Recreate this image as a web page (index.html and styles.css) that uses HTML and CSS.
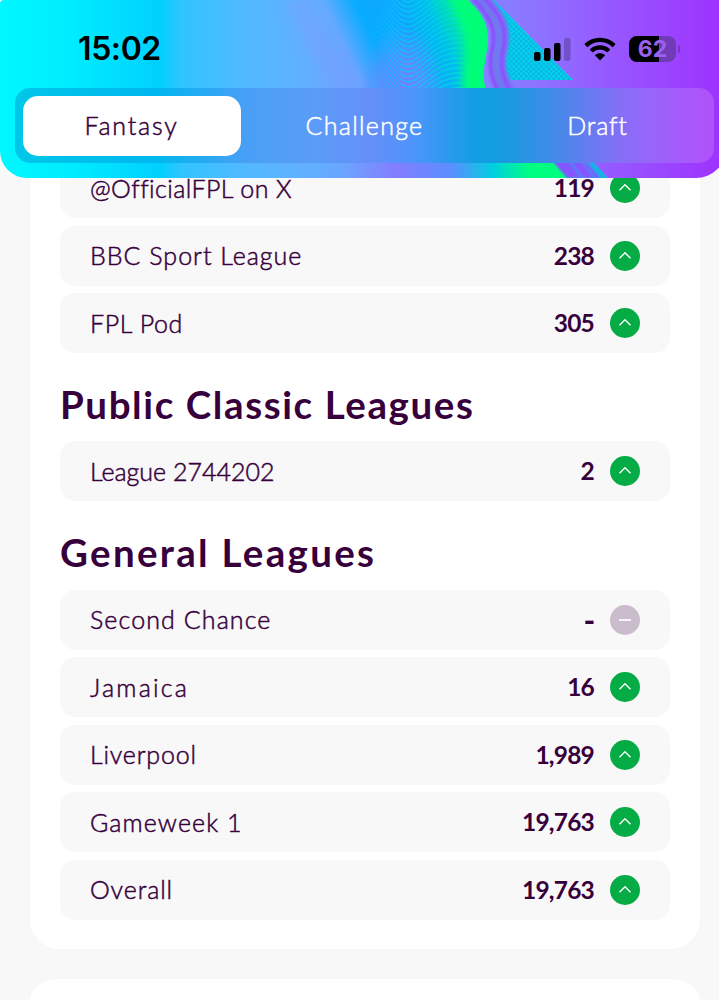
FILE: index.html
```html
<!DOCTYPE html>
<html lang="en">
<head>
  <meta charset="UTF-8">
  <meta name="viewport" content="width=device-width, initial-scale=1">
  <title>Fantasy Leagues</title>
  <link rel="stylesheet" href="styles.css">
</head>
<body>
  <!-- icons -->
  <svg class="defs" width="0" height="0">
    <symbol id="up" viewBox="0 0 30 30">
      <circle cx="15" cy="15" r="15" fill="#05ab45"/>
      <path d="M9.500 17.300 15 11.800l5.500 5.500" fill="none" stroke="#fff" stroke-width="1.400"/>
    </symbol>
    <symbol id="same" viewBox="0 0 30 30">
      <circle cx="15" cy="15" r="15" fill="#cbbccd"/>
      <path d="M9 15h12" fill="none" stroke="#fff" stroke-width="1.700"/>
    </symbol>
  </svg>

  <header class="header">
    <svg class="art" width="726" height="178" viewBox="0 0 726 178">
      <defs>
        <linearGradient id="base" gradientUnits="userSpaceOnUse" x1="0" y1="0" x2="726" y2="0">
          <stop offset="0" stop-color="#00f8ff"/>
          <stop offset=".1" stop-color="#00ecff"/>
          <stop offset=".22" stop-color="#00d0ff"/>
          <stop offset=".25" stop-color="#30c4ff"/>
          <stop offset=".33" stop-color="#50baff"/>
          <stop offset=".42" stop-color="#62b0ff"/>
          <stop offset=".6" stop-color="#7690ff"/>
          <stop offset=".72" stop-color="#8c78ff"/>
          <stop offset=".85" stop-color="#9756ff"/>
          <stop offset="1" stop-color="#9e30ff"/>
        </linearGradient>
        <linearGradient id="swirl" gradientUnits="userSpaceOnUse" x1="322" y1="0" x2="440" y2="-56">
          <stop offset="0" stop-color="#00b4ff" stop-opacity="0"/>
          <stop offset=".22" stop-color="#08acff"/>
          <stop offset=".5" stop-color="#12a4ff"/>
          <stop offset=".7" stop-color="#00bcf0"/>
          <stop offset=".85" stop-color="#00e0b0"/>
          <stop offset="1" stop-color="#00ff78"/>
        </linearGradient>
        <radialGradient id="violet">
          <stop offset="0" stop-color="#7a7cff"/>
          <stop offset=".5" stop-color="#6c86ff" stop-opacity=".8"/>
          <stop offset="1" stop-color="#5e90ff" stop-opacity="0"/>
        </radialGradient>
        <linearGradient id="waveStroke" gradientUnits="userSpaceOnUse" x1="366" y1="0" x2="470" y2="0">
          <stop offset="0" stop-color="#00c0ff" stop-opacity="0"/>
          <stop offset=".3" stop-color="#00ccf8"/>
          <stop offset="1" stop-color="#00e8c8"/>
        </linearGradient>
        <linearGradient id="strip" gradientUnits="userSpaceOnUse" x1="340" y1="0" x2="565" y2="0">
          <stop offset="0" stop-color="#6ba7ff"/>
          <stop offset=".25" stop-color="#837dff"/>
          <stop offset=".5" stop-color="#5a8fff"/>
          <stop offset=".68" stop-color="#00cfe0"/>
          <stop offset=".85" stop-color="#00ff80"/>
        </linearGradient>
        <pattern id="dots" width="5" height="5" patternUnits="userSpaceOnUse">
          <rect width="5" height="5" fill="#00d4ec"/>
          <path d="M0 0h2.500v2.500H0zM2.500 2.500h2.500v2.500h-2.500z" fill="#0db6e2"/>
        </pattern>
        <filter id="soft" x="-30%" y="-30%" width="160%" height="160%"><feGaussianBlur stdDeviation="7"/></filter>
        <filter id="mid" x="-30%" y="-30%" width="160%" height="160%"><feGaussianBlur stdDeviation="4"/></filter>
        <filter id="edge"><feGaussianBlur stdDeviation="1.100"/></filter>
        <clipPath id="swirlClip">
          <path d="M315 0H468C484 14 488 26 488 42 486 60 480 74 487 92H335z"/>
        </clipPath>
      </defs>
      <rect width="726" height="178" fill="url(#base)"/>
      <path d="M284 0h22l54 90h-28z" fill="#7a9cff" opacity=".5" filter="url(#soft)"/>
      <g clip-path="url(#swirlClip)">
        <rect x="315" width="175" height="92" fill="url(#swirl)"/>
        <ellipse cx="402" cy="90" rx="42" ry="66" fill="url(#violet)"/>
        <g id="waves" class="waves"></g>
        <path d="M446-10C462 20 468 40 465 58 462 72 462 82 462 104H496V-10z" fill="#00ff78" filter="url(#mid)"/>
      </g>
      <path d="M494 0 573 80H500z" fill="url(#dots)"/>
      <g fill="none" filter="url(#edge)">
        <path d="M477-4C498 16 503 28 500 45 496 62 496 74 508 94" stroke="#6f7af0" stroke-width="17"/>
        <path d="M471-4C490 16 495 28 493 45 489 62 488 74 500 94" stroke="#8b50ff" stroke-width="4"/>
        <path d="M482-4C502 16 506 28 504 45 500 62 500 74 512 94" stroke="#8b50ff" stroke-width="4"/>
      </g>
      <path d="M340 160H553L568 178H340z" fill="url(#strip)"/>
      <path d="M550 158h40l18 20h-40z" fill="#18b2e6"/>
      <path d="M550 158h33l17 20h-33z" fill="#8557ff" filter="url(#edge)"/>
      <path d="M564 158h5l16 20h-5zM577 158h4l16 20h-4z" fill="#3f92f0" opacity=".5"/>
    </svg>

    <div class="status">
      <span class="time">15:02</span>
      <div class="status-icons">
        <svg width="38" height="24" viewBox="0 0 38 24">
          <rect x="1" y="15" width="6.500" height="9" rx="2"/>
          <rect x="11" y="11" width="6.500" height="13" rx="2"/>
          <rect x="21" y="6" width="6.500" height="18" rx="2"/>
          <rect x="31" y="1" width="6.500" height="23" rx="2" opacity=".22"/>
        </svg>
        <svg width="32" height="24" viewBox="0 0 32 24">
          <g fill="none" stroke="#000" stroke-width="4.300">
            <path d="M1.800 8.600C10 .9 22 .9 30.200 8.600"/>
            <path d="M7.100 14C12.500 9.200 19.500 9.200 24.900 14"/>
          </g>
          <path d="M10.900 18.200c3-2.600 7.200-2.600 10.200 0L16 23.500z"/>
        </svg>
        <div class="battery"><span>62</span></div>
      </div>
    </div>

    <nav class="tabs">
      <a class="tab active">Fantasy</a>
      <a class="tab challenge">Challenge</a>
      <a class="tab">Draft</a>
    </nav>
  </header>

  <main>
    <section class="card leagues">
      <ul class="list">
        <li class="row"><span class="name n1">@OfficialFPL on X</span><b>119</b><svg class="icon"><use href="#up"/></svg></li>
        <li class="row"><span class="name n2">BBC Sport League</span><b>238</b><svg class="icon"><use href="#up"/></svg></li>
        <li class="row"><span class="name n3">FPL Pod</span><b>305</b><svg class="icon"><use href="#up"/></svg></li>
      </ul>

      <h2 class="title t1">Public Classic Leagues</h2>
      <ul class="list">
        <li class="row"><span class="name n4">League 2744202</span><b>2</b><svg class="icon"><use href="#up"/></svg></li>
      </ul>

      <h2 class="title t2">General Leagues</h2>
      <ul class="list">
        <li class="row"><span class="name n5">Second Chance</span><b class="none">-</b><svg class="icon"><use href="#same"/></svg></li>
        <li class="row"><span class="name n6">Jamaica</span><b>16</b><svg class="icon"><use href="#up"/></svg></li>
        <li class="row"><span class="name n7">Liverpool</span><b>1,989</b><svg class="icon"><use href="#up"/></svg></li>
        <li class="row"><span class="name n8">Gameweek 1</span><b>19,763</b><svg class="icon"><use href="#up"/></svg></li>
        <li class="row"><span class="name n9">Overall</span><b>19,763</b><svg class="icon"><use href="#up"/></svg></li>
      </ul>
    </section>
    <section class="card next"></section>
  </main>

  <script>
    // fine wavy lines in the header art
    const waves = document.getElementById("waves");
    for (let i = 0; i < 36; i++) {
      const y = i * 5 - 50;
      const p = document.createElementNS("http://www.w3.org/2000/svg", "path");
      p.setAttribute("d", `M366 ${y + 14}C382 ${y - 22} 392 ${y + 34} 412 ${y + 26}S442 ${y - 12} 490 ${y + 12}`);
      waves.appendChild(p);
    }
  </script>
</body>
</html>
```
FILE: styles.css
```css
* {
  box-sizing: border-box;
}
body {
  margin: 0;
  height: 1000px;
  overflow: hidden;
  background: #f8f8f8;
  color: #37003c;
  font-family: Lato, "Open Sans", sans-serif;
}
.defs {
  display: block;
}
.header {
  position: relative;
  z-index: 1;
  width: 726px;
  height: 178px;
  padding: 28px 12px 15px 15px;
  border-radius: 4px 0 30px 27px;
  overflow: hidden;
}
.art {
  position: absolute;
  top: 0;
  left: 0;
  z-index: -1;
}
.waves {
  fill: none;
  stroke: url(#waveStroke);
  stroke-width: 1.6;
  opacity: .65;
}
.status {
  display: flex;
  justify-content: space-between;
  align-items: center;
  height: 40px;
  margin-bottom: 20px;
  padding: 1px 35px 0 63px;
  color: #000;
}
.time {
  font: 600 32px/40px Inter, sans-serif;
  letter-spacing: -.4px;
  padding-top: 1px;
}
.status-icons {
  display: flex;
  align-items: center;
  gap: 13px;
}
.battery {
  display: flex;
  align-items: center;
  justify-content: center;
  width: 47px;
  height: 26px;
  border-radius: 8px;
  background: linear-gradient(90deg, #000 63%, #713bb8 63%);
  margin-right: 3px;
  position: relative;
}
.battery::after {
  content: "";
  position: absolute;
  right: -4px;
  top: 9px;
  width: 2px;
  height: 8px;
  border-radius: 0 3px 3px 0;
  background: #713bb8;
}
.battery span {
  font: 700 23px/26px Inter, sans-serif;
  color: #9b60ed;
}
.tabs {
  display: flex;
  width: 699px;
  height: 75px;
  padding: 7.5px;
  gap: 15px;
  border-radius: 15px;
  background: linear-gradient(90deg, #00c7e9 0, #00b7ee 20%, #489ff6 33%, #5b9cf7 43%, #658ff9 51%, #4d94fb 57%, #119ee2 66%, #179bdf 70%, #4988e9 78%, #8270f6 86%, #9d62fa 92%, #b052fa 100%);
}
.tab {
  flex: 1;
  display: flex;
  align-items: center;
  justify-content: center;
  padding-bottom: 2px;
  border-radius: 15px;
  color: #fff;
  font-size: 25px;
  font-weight: 300;
  -webkit-text-stroke: .5px;
  letter-spacing: .8px;
}
.tab.active {
  background: #fff;
  color: #37003c;
  letter-spacing: 1.8px;
}
.tab.challenge {
  letter-spacing: 1.3px;
}
.card {
  margin: 0 19px 0 30px;
  background: #fff;
  border-radius: 30px;
}
.leagues {
  height: 821px;
  margin-top: -50px;
  padding: 30px;
}
.next {
  height: 21px;
  margin-top: 30px;
  border-radius: 30px 30px 0 0 / 21px 21px 0 0;
}
.list {
  display: flex;
  flex-direction: column;
  gap: 7.5px;
  margin: 0;
  padding: 0;
  list-style: none;
}
.row {
  display: flex;
  align-items: center;
  height: 60px;
  padding: 0 30px;
  border-radius: 15px;
  background: #f8f8f8;
  font-size: 25px;
}
.name {
  flex: 1;
  padding-bottom: 1px;
  font-weight: 300;
  -webkit-text-stroke: .5px;
}
.n1 { letter-spacing: .4px; }
.n2 { letter-spacing: 1px; }
.n3 { letter-spacing: .6px; }
.n4 { letter-spacing: 0; }
.n5 { letter-spacing: 1.1px; }
.n6 { letter-spacing: 2.2px; }
.n7 { letter-spacing: .8px; }
.n8 { letter-spacing: 1.1px; }
.n9 { letter-spacing: .9px; }
.row b {
  padding-bottom: 1px;
  font-size: 24.5px;
  letter-spacing: -.8px;
}
.row .none {
  transform: scale(1.3, 1.3);
  transform-origin: right;
}
.icon {
  width: 30px;
  height: 30px;
  margin-left: 16px;
}
.title {
  height: 88.4px;
  margin: 0;
  padding-top: 28.5px;
  font-size: 38.5px;
  line-height: 44px;
  font-weight: 700;
  white-space: nowrap;
}
.t1 { letter-spacing: 1.6px; }
.t2 { letter-spacing: 2.3px; }
```
